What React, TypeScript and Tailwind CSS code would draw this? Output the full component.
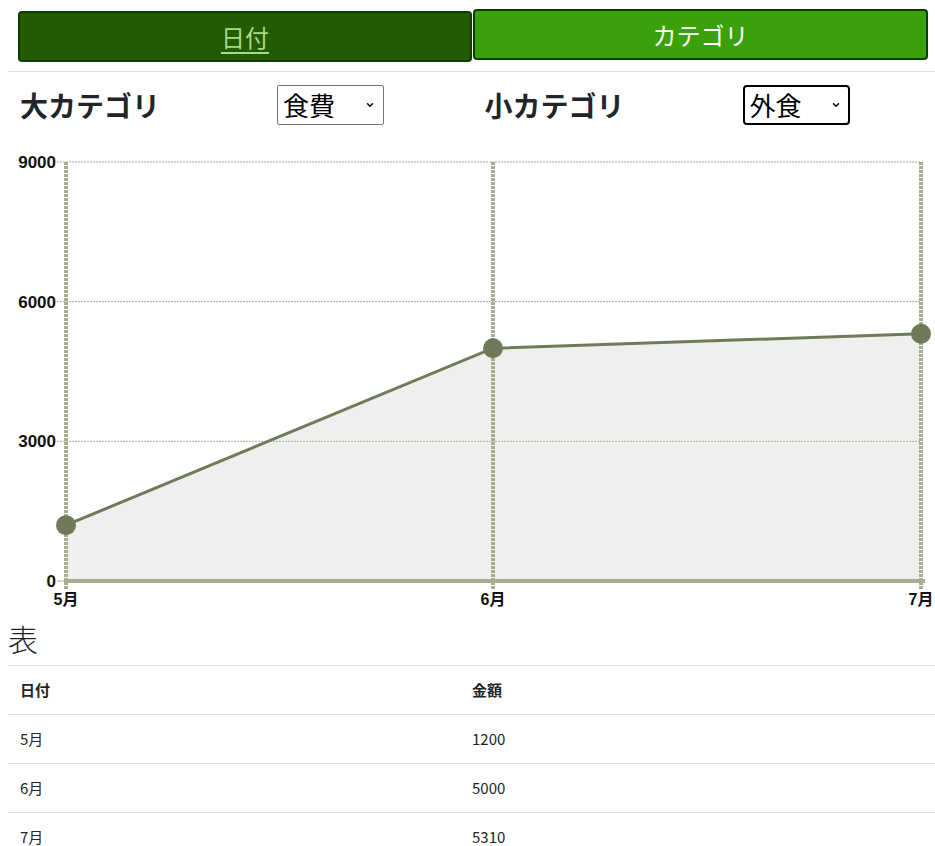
import { ChevronDown } from 'lucide-react';

type Row = { month: string; amount: number };

const rows: Row[] = [
  { month: '5月', amount: 1200 },
  { month: '6月', amount: 5000 },
  { month: '7月', amount: 5310 },
];

const jp = "font-['Noto_Sans_CJK_JP','Noto_Sans',sans-serif]";

// chart geometry (svg coords)
const X = [58, 485, 913];
const Y0 = 444;
const Y_TOP = 25;
const MAX = 9000;
const yOf = (v: number) => Y0 - (v / MAX) * (Y0 - Y_TOP);

function FakeSelect({ value, focused }: { value: string; focused?: boolean }) {
  return (
    <div className="relative w-[107px] h-[40px]">
      <select
        defaultValue={value}
        className={`appearance-none w-full h-full bg-white text-black text-[26px] leading-none pl-[5px] outline-none ${
          focused ? 'border-2 border-black rounded-[4px]' : 'border border-[#767676] rounded-[2px]'
        }`}
      >
        <option>{value}</option>
      </select>
      <ChevronDown
        className="absolute right-[9px] top-[15px] w-[10px] h-[10px] text-black pointer-events-none"
        strokeWidth={3.5}
      />
    </div>
  );
}

function LineChart() {
  const pts = rows.map((r, i) => [X[i], yOf(r.amount)] as const);
  const line = pts.map((p) => p.join(',')).join(' ');
  const area = `${line} ${X[2]},${Y0} ${X[0]},${Y0}`;

  return (
    <svg width={927} height={475} className="block font-['Liberation_Sans','Noto_Sans_CJK_JP',sans-serif]">
      <polygon points={area} fill="#efefed" />
      {/* horizontal grid */}
      {[0, 3000, 6000, 9000].map((v) => (
        <g key={v}>
          {v > 0 && (
            <line x1={49} x2={913} y1={yOf(v)} y2={yOf(v)} stroke="#a9a99c" strokeWidth={1} strokeDasharray="2 1" />
          )}
          {v === 0 && <line x1={49} x2={58} y1={Y0} y2={Y0} stroke="#a9a99c" strokeWidth={1} />}
          <text x={48} y={yOf(v) + 6} textAnchor="end" fontSize={17} fontWeight={700} fill="#111">
            {v}
          </text>
        </g>
      ))}
      {/* vertical grid */}
      {X.map((x) => (
        <line key={x} x1={x} x2={x} y1={Y_TOP} y2={453} stroke="#a5ae8e" strokeWidth={4} strokeDasharray="3 1" />
      ))}
      <line x1={56} x2={917} y1={Y0} y2={Y0} stroke="#a5ae8e" strokeWidth={4} />
      <polyline points={line} fill="none" stroke="#6f7a5b" strokeWidth={3} />
      {pts.map(([x, y], i) => (
        <circle key={i} cx={x} cy={y} r={10} fill="#6f7a5b" />
      ))}
      {rows.map((r, i) => (
        <text key={r.month} x={X[i]} y={468} textAnchor="middle" fontSize={16} fontWeight={700} fill="#111">
          {r.month}
        </text>
      ))}
    </svg>
  );
}

export default function App() {
  return (
    <div className={`w-[935px] pl-2 bg-white text-[#212529] ${jp}`}>
      {/* tabs */}
      <div className="flex pt-[9px] pl-[10px] gap-px">
        <button className="mt-[2px] w-[454px] h-[51px] bg-[#225c02] border-2 border-[#0f3d00] rounded-[4px] text-[24px] text-[#a8d98a] underline underline-offset-[5px]">
          日付
        </button>
        <button className="w-[455px] h-[51px] bg-[#3aa10a] border-2 border-[#0f3d00] rounded-[4px] text-[24px] text-white">
          カテゴリ
        </button>
      </div>

      <div className="mt-[9px] border-t border-[#dee2e6]" />

      {/* category selectors */}
      <div className="grid grid-cols-2 h-[65px] items-center">
        <div className="flex items-center pl-3">
          <div className="w-[257px] text-[28px] font-bold">大カテゴリ</div>
          <FakeSelect value="食費" />
        </div>
        <div className="flex items-center pl-[13px]">
          <div className="w-[258px] text-[28px] font-bold">小カテゴリ</div>
          <FakeSelect value="外食" focused />
        </div>
      </div>

      <LineChart />

      <div className="h-[53px] flex items-center text-[30px] font-light">表</div>

      <table className="w-full border-collapse text-[15px]">
        <thead>
          <tr className="border-t border-[#dee2e6]">
            <th className="w-[452px] h-[49px] px-3 text-left font-bold">日付</th>
            <th className="h-[49px] px-3 text-left font-bold">金額</th>
          </tr>
        </thead>
        <tbody>
          {rows.map((r) => (
            <tr key={r.month} className="border-t border-[#dee2e6]">
              <td className="h-[49px] px-3">{r.month}</td>
              <td className="h-[49px] px-3">{r.amount}</td>
            </tr>
          ))}
        </tbody>
      </table>
    </div>
  );
}
